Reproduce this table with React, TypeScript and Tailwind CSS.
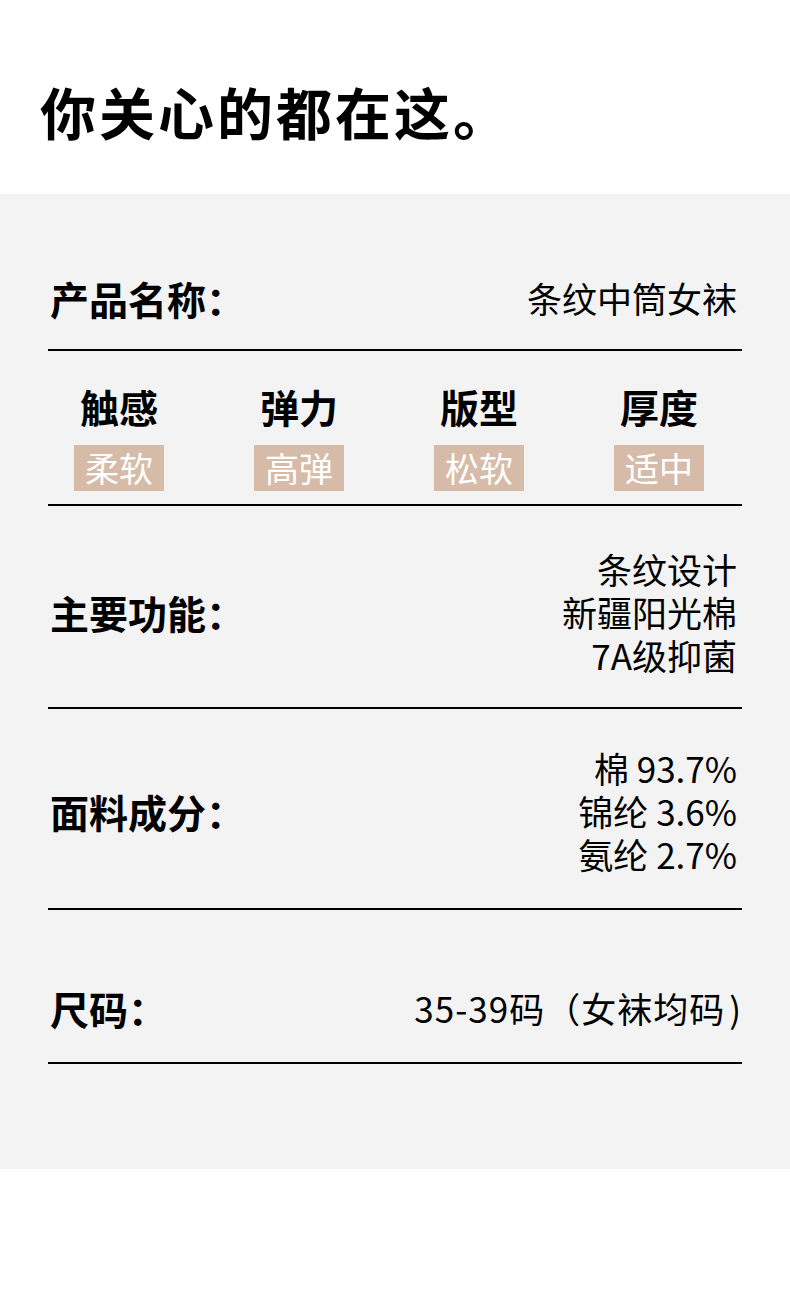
const FONT = { fontFamily: '"Noto Sans CJK SC", "Noto Sans", sans-serif' }

const specs = [
  { name: '触感', value: '柔软' },
  { name: '弹力', value: '高弹' },
  { name: '版型', value: '松软' },
  { name: '厚度', value: '适中' },
]

function Label({ children }: { children: React.ReactNode }) {
  return <div className="pl-[2px] text-[39px] font-bold leading-[48px] text-black">{children}</div>
}

function Lines({ items }: { items: string[] }) {
  return (
    <div className="pr-[5px] text-right text-[35px] leading-[43px] text-black">
      {items.map((t) => (
        <div key={t}>{t}</div>
      ))}
    </div>
  )
}

export default function App() {
  return (
    <div className="w-[790px] bg-white" style={FONT}>
      {/* 标题 */}
      <div className="flex h-[194px] items-center pl-[40px] pt-[28px]">
        <h1 className="text-[56px] font-bold leading-[64px] tracking-[3px] text-black">你关心的都在这。</h1>
      </div>

      <div className="h-[975px] bg-[#f3f3f3] px-[48px]">
        {/* 产品名称 */}
        <div className="flex items-center justify-between border-b-2 border-black pt-[80px] pb-[27px]">
          <Label>产品名称：</Label>
          <div className="pr-[5px] text-[35px] leading-[48px] text-black">条纹中筒女袜</div>
        </div>

        {/* 规格 */}
        <div className="flex gap-[90px] border-b-2 border-black pl-[26px] pt-[31px] pb-[13px]">
          {specs.map((s) => (
            <div key={s.name} className="flex w-[90px] flex-col items-center">
              <div className="whitespace-nowrap text-[39px] font-bold leading-[48px] text-black">{s.name}</div>
              <div className="mt-[15px] flex h-[46px] w-[90px] items-center justify-center bg-[#d6bca8] text-[34px] leading-none text-white">
                {s.value}
              </div>
            </div>
          ))}
        </div>

        {/* 主要功能 */}
        <div className="flex items-center justify-between border-b-2 border-black pt-[41px] pb-[31px]">
          <Label>主要功能：</Label>
          <Lines items={['条纹设计', '新疆阳光棉', '7A级抑菌']} />
        </div>

        {/* 面料成分 */}
        <div className="flex items-center justify-between border-b-2 border-black pt-[37px] pb-[33px]">
          <Label>面料成分：</Label>
          <Lines items={['棉 93.7%', '锦纶 3.6%', '氨纶 2.7%']} />
        </div>

        {/* 尺码 */}
        <div className="flex items-center justify-between border-b-2 border-black pt-[74px] pb-[30px]">
          <Label>尺码：</Label>
          <div className="text-[35px] leading-[48px] tracking-[1px] text-black">
            35-39码（女袜均码<span className="ml-[4px]">)</span>
          </div>
        </div>
      </div>

      <div className="h-[126px] bg-white" />
    </div>
  )
}
